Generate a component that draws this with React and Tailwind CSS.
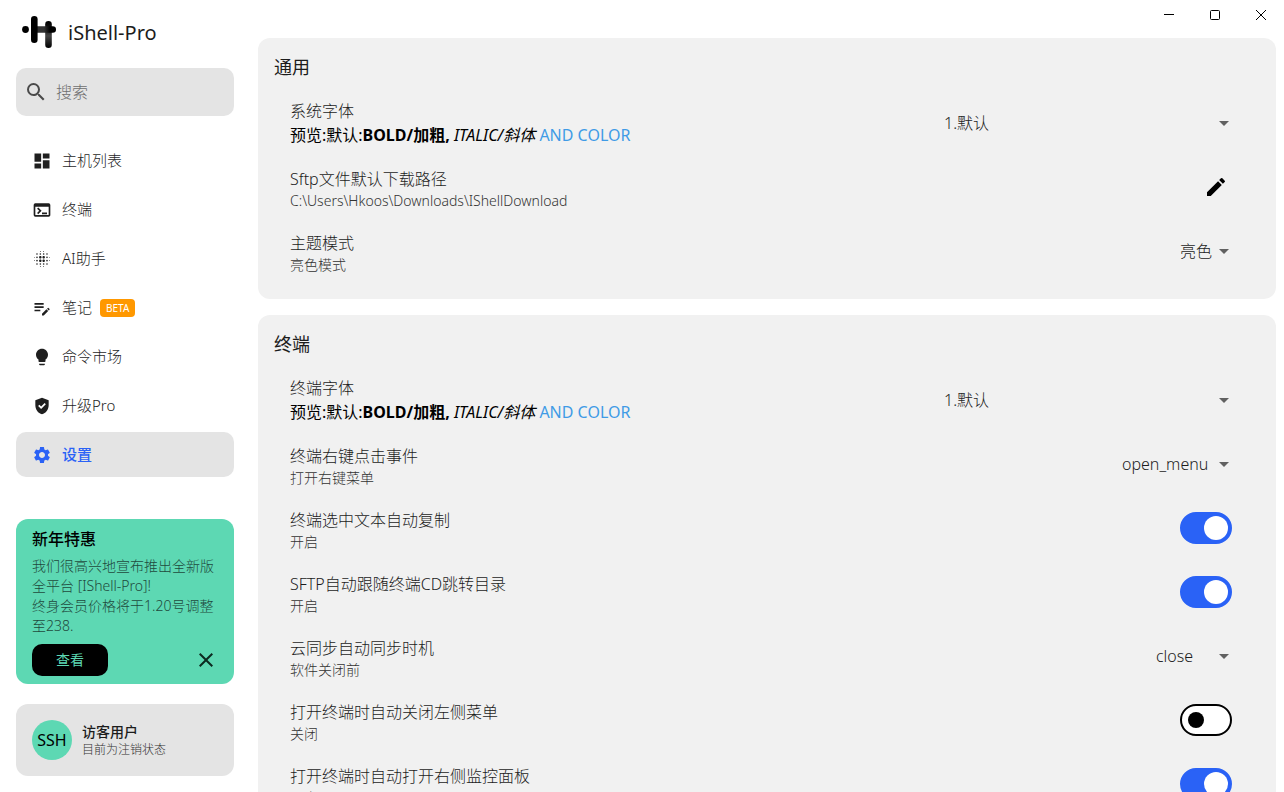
import React, { useState } from "react";
import {
  MdDashboard,
  MdTerminal,
  MdBlurOn,
  MdEditNote,
  MdGppGood,
  MdSettings,
  MdSearch,
  MdClose,
  MdEdit,
  MdArrowDropDown,
} from "react-icons/md";
import clsx from "clsx";

const Bulb = ({ size }) => (
  <svg width={size} height={size} viewBox="0 0 24 24" fill="currentColor" aria-hidden="true">
    <path d="M12 2C8 2 4.8 5.2 4.8 9.2c0 2.5 1.2 4.6 3 5.9V17c0 .6.4 1 1 1h6.4c.6 0 1-.4 1-1v-1.9c1.8-1.3 3-3.4 3-5.9C19.2 5.2 16 2 12 2z" />
    <path d="M8.5 20.2h7v.6c0 .6-.4 1-1 1h-5c-.6 0-1-.4-1-1z" />
  </svg>
);

const navItems = [
  { label: "主机列表", icon: MdDashboard },
  { label: "终端", icon: MdTerminal },
  { label: "AI助手", icon: MdBlurOn },
  { label: "笔记", icon: MdEditNote, badge: "BETA" },
  { label: "命令市场", icon: Bulb },
  { label: "升级Pro", icon: MdGppGood },
  { label: "设置", icon: MdSettings },
];

const Logo = () => (
  <svg width="34" height="34" viewBox="0 0 34 34" aria-hidden="true">
    <defs>
      <linearGradient id="stem" x1="0" y1="0" x2="0" y2="1">
        <stop offset="0" stopColor="#000" />
        <stop offset="0.25" stopColor="#111" />
        <stop offset="0.55" stopColor="#444" />
        <stop offset="1" stopColor="#000" />
      </linearGradient>
      <linearGradient id="bar" x1="0" y1="0" x2="1" y2="0">
        <stop offset="0.2" stopColor="#333" />
        <stop offset="0.5" stopColor="#333" />
        <stop offset="0.75" stopColor="#000" />
      </linearGradient>
    </defs>
    <circle cx="3.5" cy="14.5" r="3.4" />
    <rect x="23.2" y="6" width="6.6" height="27" rx="3.3" fill="url(#stem)" />
    <rect x="10" y="11.3" width="24" height="6.4" rx="3.2" fill="url(#bar)" />
    <rect x="9" y="1" width="6.6" height="27" rx="3.3" />
  </svg>
);

const NavItem = ({ item, active, onClick }) => {
  const Icon = item.icon;
  return (
    <button
      onClick={onClick}
      className={clsx(
        "flex h-[45px] w-full items-center rounded-[10px] pl-4 text-[15px]",
        active ? "bg-[#e4e4e4] font-medium text-[#2a62f6]" : "text-[#1f1f1f] font-light"
      )}
    >
      <Icon size={20} />
      <span className="ml-[10px]">{item.label}</span>
      {item.badge && (
        <span className="ml-2 rounded bg-[#ff9800] px-[6px] text-[10px] leading-[18px] font-normal text-white">
          {item.badge}
        </span>
      )}
    </button>
  );
};

const Sidebar = () => {
  const [active, setActive] = useState("设置");

  return (
    <aside className="flex w-[250px] shrink-0 flex-col px-4 pb-4">
      <div className="flex h-[68px] items-center gap-3 pl-[6px] pb-1">
        <Logo />
        <h1 className="pt-[2px] text-xl text-[#1c1c1c]">iShell-Pro</h1>
      </div>

      <label className="flex h-12 shrink-0 items-center rounded-[10px] bg-[#e4e4e4] px-2 text-[#4a4a4a]">
        <MdSearch size={24} className="shrink-0" />
        <input
          type="text"
          aria-label="搜索"
          placeholder="搜索"
          className="ml-2 w-full min-w-0 bg-transparent text-base font-light outline-none placeholder:text-[#6f6f6f]"
        />
      </label>

      <nav className="mt-[22px] flex flex-col gap-1">
        {navItems.map((item) => (
          <NavItem
            key={item.label}
            item={item}
            active={active === item.label}
            onClick={() => setActive(item.label)}
          />
        ))}
      </nav>

      <div className="mt-auto rounded-xl bg-[#5dd8b3] px-4 py-2">
        <h2 className="text-base font-medium text-black">新年特惠</h2>
        <p className="mt-[5px] text-sm font-light text-[#1f4a3d]">
          我们很高兴地宣布推出全新版全平台 [IShell-Pro]!
          <br />
          终身会员价格将于1.20号调整至238.
        </p>
        <div className="mt-2 flex items-center justify-between">
          <button className="h-8 w-[76px] rounded-[10px] bg-black text-sm text-[#5dd8b3]">查看</button>
          <button aria-label="关闭" className="text-[#0c2a20]">
            <MdClose size={24} />
          </button>
        </div>
      </div>

      <div className="mt-5 flex h-[72px] items-center gap-[10px] rounded-xl bg-[#e4e4e4] px-4">
        <div className="flex size-10 items-center justify-center rounded-full bg-[#5dd8b3] text-base text-black">
          SSH
        </div>
        <div className="pt-[2px]">
          <div className="text-sm leading-[18px] font-medium text-[#1c1c1c]">访客用户</div>
          <div className="text-xs leading-[18px] font-light text-[#333]">目前为注销状态</div>
        </div>
      </div>
    </aside>
  );
};

const WindowControls = () => (
  <div className="flex h-[30px] shrink-0 justify-end text-black">
    <button aria-label="最小化" className="flex w-[46px] items-center justify-center">
      <svg width="10" height="10" viewBox="0 0 10 10" stroke="currentColor">
        <path d="M0 4.5h10" />
      </svg>
    </button>
    <button aria-label="最大化" className="flex w-[46px] items-center justify-center">
      <svg width="10" height="10" viewBox="0 0 10 10" fill="none" stroke="currentColor">
        <rect x="0.5" y="0.5" width="9" height="9" rx="1" />
      </svg>
    </button>
    <button aria-label="关闭窗口" className="flex w-[46px] items-center justify-center">
      <svg width="10" height="10" viewBox="0 0 10 10" stroke="currentColor">
        <path d="M0 0l10 10M10 0L0 10" />
      </svg>
    </button>
  </div>
);

const Section = ({ title, children }) => (
  <section className="rounded-xl bg-[#f1f1f1] px-4 pt-4 pb-4">
    <h2 className="mb-[11px] text-lg leading-[26px] text-[#1c1c1c]">{title}</h2>
    {children}
  </section>
);

const Row = ({ id, title, desc, children }) => (
  <div className="flex h-16 items-center justify-between pr-6 pl-4">
    <div className="pt-1">
      <label htmlFor={id} className="block text-base leading-6 font-light text-[#1c1c1c]">
        {title}
      </label>
      <div className="text-sm leading-5 font-light text-[#333]">{desc}</div>
    </div>
    {children}
  </div>
);

const FontPreview = () => (
  <p className="mb-1 text-base leading-6 font-normal text-black">
    预览:默认:<b>BOLD/加粗,</b> <i>ITALIC/斜体</i>{" "}
    <span className="text-[#3f9be6]">AND COLOR</span>
  </p>
);

const Select = ({ id, options, className }) => (
  <div className="relative flex items-center">
    <select
      id={id}
      className={clsx(
        "h-12 appearance-none bg-transparent pr-6 text-base font-light text-[#1c1c1c] outline-none",
        className
      )}
    >
      {options.map((o) => (
        <option key={o}>{o}</option>
      ))}
    </select>
    <MdArrowDropDown size={24} className="pointer-events-none absolute right-0 text-[#616161]" />
  </div>
);

const Toggle = ({ id, defaultChecked }) => (
  <span className="relative mr-1 flex h-8 w-[52px]">
    <input
      id={id}
      type="checkbox"
      role="switch"
      defaultChecked={defaultChecked}
      className="peer h-8 w-[52px] appearance-none rounded-full border-2 border-black bg-white checked:border-[#2a62f6] checked:bg-[#2a62f6]"
    />
    <span className="pointer-events-none absolute top-2 left-2 size-4 rounded-full bg-black peer-checked:top-1 peer-checked:left-6 peer-checked:size-6 peer-checked:bg-white" />
  </span>
);

export default function App() {
  return (
    <div className="flex h-screen overflow-hidden bg-white font-['Noto_Sans','Noto_Sans_CJK_SC',sans-serif]">
      <Sidebar />
      <div className="flex min-w-0 flex-1 flex-col">
        <WindowControls />
        <main className="flex-1 space-y-4 overflow-hidden px-2 pt-2">
          <Section title="通用">
            <Row id="system-font" title="系统字体" desc={<FontPreview />}>
              <Select id="system-font" options={["1.默认"]} className="w-[292px]" />
            </Row>
            <Row id="download-path" title="Sftp文件默认下载路径" desc="C:\Users\Hkoos\Downloads\IShellDownload">
              <button id="download-path" className="mr-1 p-1 text-black">
                <MdEdit size={24} />
              </button>
            </Row>
            <Row id="theme" title="主题模式" desc="亮色模式">
              <Select id="theme" options={["亮色", "暗色"]} className="w-14" />
            </Row>
          </Section>

          <Section title="终端">
            <Row id="terminal-font" title="终端字体" desc={<FontPreview />}>
              <Select id="terminal-font" options={["1.默认"]} className="w-[292px]" />
            </Row>
            <Row id="right-click" title="终端右键点击事件" desc="打开右键菜单">
              <Select id="right-click" options={["open_menu", "paste"]} className="w-[114px]" />
            </Row>
            <Row id="auto-copy" title="终端选中文本自动复制" desc="开启">
              <Toggle id="auto-copy" defaultChecked />
            </Row>
            <Row id="follow-cd" title="SFTP自动跟随终端CD跳转目录" desc="开启">
              <Toggle id="follow-cd" defaultChecked />
            </Row>
            <Row id="sync-time" title="云同步自动同步时机" desc="软件关闭前">
              <Select id="sync-time" options={["close", "change"]} className="w-20" />
            </Row>
            <Row id="hide-menu" title="打开终端时自动关闭左侧菜单" desc="关闭">
              <Toggle id="hide-menu" />
            </Row>
            <Row id="show-monitor" title="打开终端时自动打开右侧监控面板" desc="开启">
              <Toggle id="show-monitor" defaultChecked />
            </Row>
          </Section>
        </main>
      </div>
    </div>
  );
}
